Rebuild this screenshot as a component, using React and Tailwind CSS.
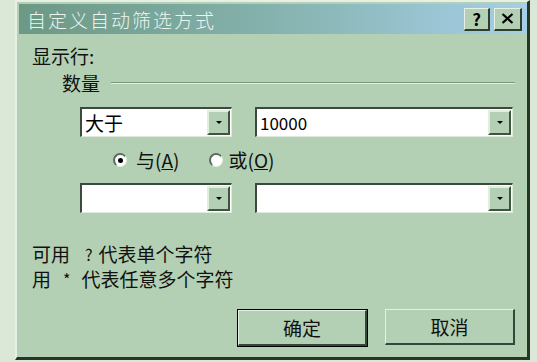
import React from 'react';

const font = { fontFamily: '"Noto Sans CJK SC", "Noto Sans", sans-serif' };

function DropButton() {
    return (
        <div className="w-[23px] h-[25px] bg-[#b3d0b4] border-t-2 border-l-2 border-[#e2eee0] border-r-2 border-b-2 border-r-[#3e5440] border-b-[#3e5440] flex items-center justify-center">
            <svg width="8" height="5" viewBox="0 0 8 5"><path d="M1 1h6L4 4z" fill="#000" /></svg>
        </div>
    );
}

function Combo({ width, value, small }) {
    return (
        <div className={`${width} h-[30px] bg-white border-t-2 border-l-2 border-[#3c4a3e] border-r border-b border-r-[#dfeadd] border-b-[#dfeadd] flex items-center justify-between pr-[1px]`}>
            <span className={`pl-[3px] ${small ? 'text-[17px]' : 'text-[19px]'} leading-none text-black`}>{value}</span>
            <DropButton />
        </div>
    );
}

function Radio({ checked }) {
    return (
        <span className="w-[14px] h-[14px] rounded-full bg-white border-t-2 border-l-2 border-[#5b6b5c] border-r border-b border-r-[#e6f0e4] border-b-[#e6f0e4] flex items-center justify-center">
            {checked && <span className="w-[5px] h-[5px] rounded-full bg-black" />}
        </span>
    );
}

export default function App() {
    return (
        <div className="w-[537px] h-[362px] bg-[#dbe8d8] overflow-hidden" style={font}>
            {/* Window */}
            <div className="ml-[15px] w-[515px] h-[360px] bg-[#b3d0b4] border-l-2 border-t-2 border-[#e6f0e4] border-r-[3px] border-b-[3px] border-r-[#243626] border-b-[#243626] pl-[2px] pt-[2px] flex flex-col">

                {/* Title bar */}
                <div className="h-[30px] bg-gradient-to-r from-[#6c9985] via-[#86b2ae] to-[#a6cfe8] flex items-center pl-[8px] pr-[5px]">
                    <span className="text-[19px] leading-none text-[#eef5ee] tracking-[2px] font-light">自定义自动筛选方式</span>
                    <div className="ml-auto flex gap-[4px]">
                        <div className="w-[26px] h-[23px] bg-[#b3d0b4] border-t border-l border-[#e6f0e4] border-r-2 border-b-2 border-r-[#2c3e2e] border-b-[#2c3e2e] flex items-center justify-center text-[17px] font-bold leading-none text-black">?</div>
                        <div className="w-[28px] h-[23px] bg-[#b3d0b4] border-t border-l border-[#e6f0e4] border-r-2 border-b-2 border-r-[#2c3e2e] border-b-[#2c3e2e] flex items-center justify-center">
                            <svg width="13" height="11" viewBox="0 0 13 11"><path d="M1.5 1l10 9M11.5 1l-10 9" stroke="#000" strokeWidth="2.2" /></svg>
                        </div>
                    </div>
                </div>

                {/* Body */}
                <div className="pl-[13px] pr-[12px] flex flex-col text-[19px] text-[#111] leading-[24px]">
                    <div className="mt-[10px]">显示行:</div>
                    <div className="mt-[3px] ml-[30px] flex items-center gap-[11px]">
                        <span>数量</span>
                        <div className="flex-1 flex flex-col">
                            <div className="h-px bg-[#7a967c]" />
                            <div className="h-px bg-[#e2eee0]" />
                        </div>
                    </div>

                    <div className="mt-[12px] ml-[48px] flex gap-[23px]">
                        <Combo width="w-[152px]" value="大于" />
                        <Combo width="w-[258px]" value="10000" small />
                    </div>

                    <div className="mt-[10px] ml-[81px] flex items-center h-[26px]">
                        <Radio checked />
                        <span className="ml-[9px]">与(<span className="underline">A</span>)</span>
                        <span className="ml-[30px]"><Radio /></span>
                        <span className="ml-[5px]">或(<span className="underline">O</span>)</span>
                    </div>

                    <div className="mt-[10px] ml-[48px] flex gap-[23px]">
                        <Combo width="w-[152px]" value="" />
                        <Combo width="w-[258px]" value="" />
                    </div>

                    <div className="mt-[29px] flex">
                        <span>可用</span>
                        <span className="ml-[15px] text-[16px]">?</span>
                        <span className="ml-[6px]">代表单个字符</span>
                    </div>
                    <div className="mt-[1px] flex">
                        <span>用</span>
                        <span className="ml-[12px] text-[16px]">*</span>
                        <span className="ml-[11px]">代表任意多个字符</span>
                    </div>

                    <div className="mt-[18px] ml-[205px] flex gap-[17px]">
                        <button className="w-[131px] h-[38px] border border-black bg-[#b3d0b4] flex">
                            <span className="flex-1 border-t border-l border-[#e6f0e4] border-r-2 border-b-2 border-r-[#34483a] border-b-[#34483a] flex items-center justify-center text-[19px]">确定</span>
                        </button>
                        <button className="w-[130px] h-[36px] bg-[#b3d0b4] border-t border-l border-[#e6f0e4] border-r-2 border-b-2 border-r-[#34483a] border-b-[#34483a] flex items-center justify-center text-[19px]">取消</button>
                    </div>
                </div>
            </div>
        </div>
    );
}
